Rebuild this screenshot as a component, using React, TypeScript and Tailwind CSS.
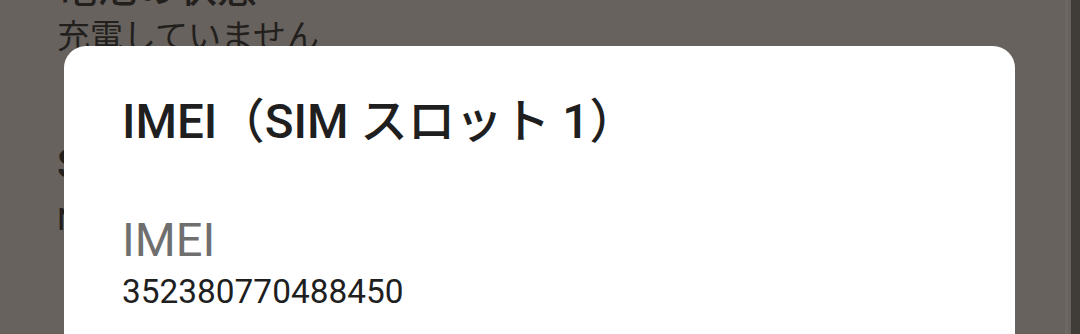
import React from "react";

const jp = { fontFamily: 'Roboto, "Noto Sans CJK JP", sans-serif' };

export default function App() {
  return (
    <div className="relative w-[1080px] h-[334px] overflow-hidden flex bg-[#67625e]" style={jp}>
      <div className="flex-1 flex flex-col pl-[57px] text-[#221f1d]">
        <div className="mt-[-31px] text-[40px] leading-none font-medium whitespace-nowrap">電池の状態</div>
        <div className="mt-[11px] text-[33px] leading-none whitespace-nowrap">充電していません</div>
        <div className="mt-[92px] text-[40px] leading-none font-medium whitespace-nowrap">SIM のステータス</div>
        <div className="mt-[18px] text-[32px] leading-none whitespace-nowrap">NTT DOCOMO</div>
      </div>
      <div className="w-[3px] bg-[#6c6864]" />
      <div className="w-[3px]" />
      <div className="w-[9px] bg-[#403c38]" />
      <div className="absolute left-[64px] top-[46px] w-[951px] h-[320px] rounded-[22px] bg-white pl-[58px] pt-[53px] flex flex-col">
        <div className="text-[47.5px] leading-none font-medium text-[#1f1f1f] whitespace-nowrap">IMEI（SIM スロット 1）</div>
        <div className="mt-[69px] text-[47px] leading-none text-[#6f6f6f] whitespace-nowrap">IMEI</div>
        <div className="mt-[12px] text-[33.4px] leading-none text-[#1f1f1f] whitespace-nowrap">352380770488450</div>
      </div>
    </div>
  );
}
